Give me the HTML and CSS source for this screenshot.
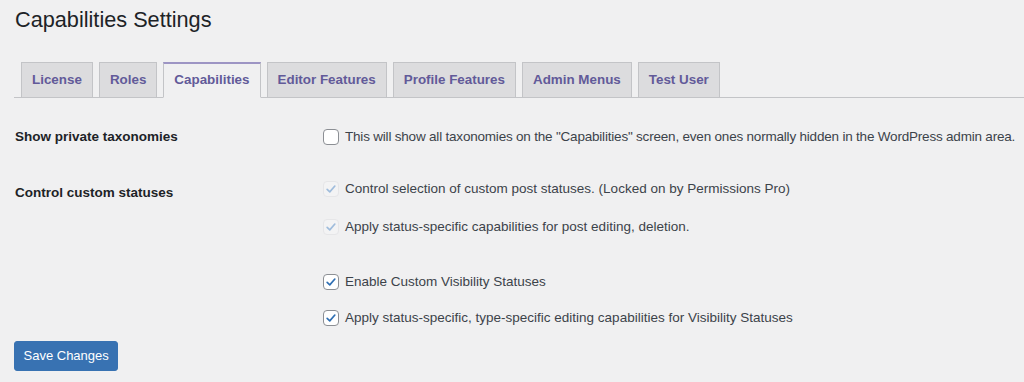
FILE: index.html
```html
<!DOCTYPE html>
<html lang="en">
<head>
<meta charset="utf-8">
<title>Capabilities Settings</title>
<link rel="stylesheet" href="styles.css">
</head>
<body>
<div class="wrap">
  <h1 class="title">Capabilities Settings</h1>
  <nav class="tabs">
    <a class="tab">License</a>
    <a class="tab">Roles</a>
    <a class="tab active">Capabilities</a>
    <a class="tab">Editor Features</a>
    <a class="tab">Profile Features</a>
    <a class="tab">Admin Menus</a>
    <a class="tab">Test User</a>
  </nav>
  <div class="form">
    <div class="row row-tax">
      <div class="label">Show private taxonomies</div>
      <div class="ctrl">
        <label class="opt opt-long"><span class="cb"></span>This will show all taxonomies on the "Capabilities" screen, even ones normally hidden in the WordPress admin area.</label>
      </div>
    </div>
    <div class="row row-status">
      <div class="label label-status">Control custom statuses</div>
      <div class="ctrl">
        <label class="opt"><span class="cb disabled"><svg viewBox="0 0 16 16"><path d="M3.6 8.4 L6.6 11.3 L12.4 4.6"/></svg></span>Control selection of custom post statuses. (Locked on by Permissions Pro)</label>
        <label class="opt opt-2"><span class="cb disabled"><svg viewBox="0 0 16 16"><path d="M3.6 8.4 L6.6 11.3 L12.4 4.6"/></svg></span>Apply status-specific capabilities for post editing, deletion.</label>
        <label class="opt opt-3"><span class="cb checked"><svg viewBox="0 0 16 16"><path d="M3.6 8.4 L6.6 11.3 L12.4 4.6"/></svg></span>Enable Custom Visibility Statuses</label>
        <label class="opt opt-4"><span class="cb checked"><svg viewBox="0 0 16 16"><path d="M3.6 8.4 L6.6 11.3 L12.4 4.6"/></svg></span>Apply status-specific, type-specific editing capabilities for Visibility Statuses</label>
      </div>
    </div>
  </div>
  <button class="save" type="button">Save Changes</button>
</div>
</body>
</html>
```
FILE: styles.css
```css
html, body {
  margin: 0;
  padding: 0;
  background: #f0f0f1;
}
body {
  font-family: "Liberation Sans", Arial, sans-serif;
  font-size: 13.5px;
  color: #3c434a;
  width: 1024px;
  height: 382px;
  overflow: hidden;
}
.wrap {
  padding-left: 14px;
}
.title {
  margin: 5px 0 0 1px;
  font-size: 21.7px;
  line-height: 29px;
  font-weight: 400;
  color: #1d2327;
}
.tabs {
  display: flex;
  margin-top: 28px;
  height: 35px;
  border-bottom: 1px solid #c3c4c7;
  padding-left: 7px;
  gap: 6px;
}
.tab {
  display: block;
  height: 24px;
  padding: 5px 10px;
  border: 1px solid #c3c4c7;
  background: #dcdcde;
  color: #625a99;
  font-weight: 700;
  font-size: 13.4px;
  line-height: 24px;
  white-space: nowrap;
}
.tab.active {
  background: #f0f0f1;
  border-bottom-color: #f0f0f1;
  border-top: 2px solid #9d95c4;
  padding-top: 4px;
}
.form {
  padding-top: 29px;
}
.row {
  display: flex;
}
.row-status {
  margin-top: 32px;
}
.label {
  width: 308px;
  flex: none;
  padding-left: 1px;
  font-weight: 700;
  color: #1d2327;
  line-height: 20px;
}
.label-status {
  padding-top: 4px;
}
.ctrl {
  display: flex;
  flex-direction: column;
}
.opt {
  display: flex;
  align-items: center;
  line-height: 20px;
  white-space: nowrap;
}
.opt-long {
  letter-spacing: -0.2px;
}
.opt-2 { margin-top: 18px; }
.opt-3 { margin-top: 35px; }
.opt-4 { margin-top: 16px; }
.cb {
  width: 14px;
  height: 14px;
  flex: none;
  border: 1px solid #8c8f94;
  border-radius: 4px;
  background: #fff;
  margin-right: 6px;
  display: flex;
  align-items: center;
  justify-content: center;
}
.cb svg {
  width: 14px;
  height: 14px;
  fill: none;
  stroke: #2f6fb3;
  stroke-width: 1.9;
  stroke-linecap: round;
  stroke-linejoin: round;
}
.cb.disabled {
  border-color: #e6e6e8;
  background: #f3f3f4;
}
.cb.disabled svg {
  stroke: #9fbcdc;
}
.save {
  display: block;
  margin-top: 13px;
  height: 30px;
  padding: 0 8.5px;
  border: 1px solid #3872b2;
  border-radius: 3px;
  background: #3872b2;
  color: #fff;
  font-family: "Liberation Sans", Arial, sans-serif;
  font-size: 13px;
  line-height: 28px;
}
```
